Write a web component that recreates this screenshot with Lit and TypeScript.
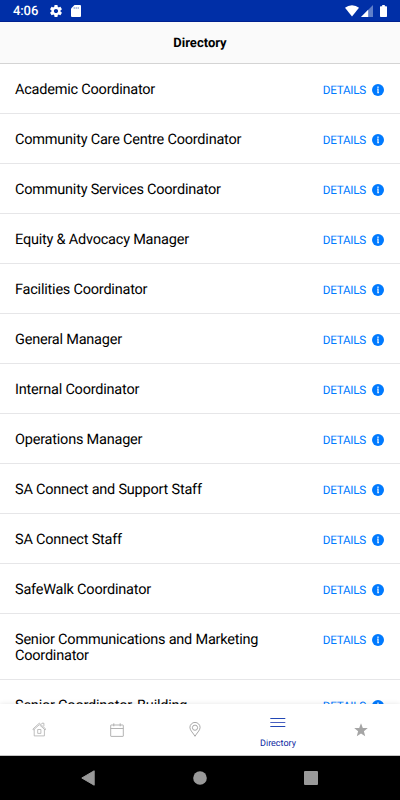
import { LitElement, html, css, svg } from "lit";
import { customElement } from "lit/decorators.js";

const entries = [
  "Academic Coordinator",
  "Community Care Centre Coordinator",
  "Community Services Coordinator",
  "Equity & Advocacy Manager",
  "Facilities Coordinator",
  "General Manager",
  "Internal Coordinator",
  "Operations Manager",
  "SA Connect and Support Staff",
  "SA Connect Staff",
  "SafeWalk Coordinator",
  "Senior Communications and Marketing Coordinator",
  "Senior Coordinator, Building",
];

const icon = (w: number, h: number, body: unknown) =>
  html`<svg width=${w} height=${h} viewBox="0 0 ${w} ${h}" fill="none">${body}</svg>`;

const gear = html`<svg width="12" height="12" viewBox="2 2 20 20" fill="#fff"><path d="M19.43 12.98c.04-.32.07-.64.07-.98s-.03-.66-.07-.98l2.11-1.65c.19-.15.24-.42.12-.64l-2-3.46c-.12-.22-.39-.3-.61-.22l-2.49 1c-.52-.4-1.08-.73-1.69-.98l-.38-2.65C14.46 2.18 14.25 2 14 2h-4c-.25 0-.46.18-.49.42l-.38 2.65c-.61.25-1.17.59-1.69.98l-2.49-1c-.23-.09-.49 0-.61.22l-2 3.46c-.13.22-.07.49.12.64l2.11 1.65c-.04.32-.07.65-.07.98s.03.66.07.98l-2.11 1.65c-.19.15-.24.42-.12.64l2 3.46c.12.22.39.3.61.22l2.49-1c.52.4 1.08.73 1.69.98l.38 2.65c.03.24.24.42.49.42h4c.25 0 .46-.18.49-.42l.38-2.65c.61-.25 1.17-.59 1.69-.98l2.49 1c.23.09.49 0 .61-.22l2-3.46c.12-.22.07-.49-.12-.64l-2.11-1.65zM12 15.5c-1.930 0-3.500-1.570-3.500-3.500s1.570-3.500 3.500-3.500 3.500 1.570 3.500 3.500-1.570 3.500-3.500 3.500z"/></svg>`;

const sdCard = icon(10, 12, svg`<path d="M3.500 0H9q1 0 1 1v10q0 1-1 1H1q-1 0-1-1V3.500z" fill="#fff"/><path d="M3.200 2v2M5.200 2v2M7.200 2v2" stroke="#7f96cf" stroke-width=".9"/>`);
const wifi = icon(14, 12, svg`<path d="M0 2.700Q3 .2 7 .2t7 2.500L7 11.500z" fill="#fff"/>`);
const signal = icon(12, 12, svg`<path d="M12 0v12H0z" fill="#5f7fca"/><path d="M7.200 4.800V12H0z" fill="#fff"/>`);
const battery = icon(7, 12, svg`<path d="M2.200 0h2.600v1.200H6.300q.7 0 .7.700v9.400q0 .7-.7.700H.7q-.7 0-.7-.7V1.900q0-.7.7-.7h1.500z" fill="#fff"/>`);
const info = icon(12, 12, svg`<circle cx="6" cy="6" r="6" fill="#007aff"/><path d="M6 2.600v1.400M5.200 5.200H6v3.600M5.300 8.700h1.600" stroke="#fff" stroke-width="1.200"/>`);

const house = icon(15, 15, svg`<g stroke="#aaa" stroke-width=".75"><path d="M2.200 7.300v6.600h10.200V7.300"/><path d="M.8 7.100 7.300 1.200l6.500 5.900-.7.800-5.800-5.200-5.800 5.200z"/><path d="M9.200 2.300l.8-1.100h1.900v3"/><path d="M5.700 7.500h3.200v3.900H5.700z"/></g>`);
const calendar = icon(14, 14, svg`<g stroke="#aaa" stroke-width=".9"><rect x=".7" y="2" width="12.600" height="11.400" rx=".4"/><path d="M.7 5.500h12.600M3.800.3v3M10.200.3v3"/></g>`);
const pin = icon(12, 15, svg`<g stroke="#999" stroke-width=".85"><path d="M6 14.300C4.500 11.300.9 8.500.9 5.500a5.100 5.100 0 0 1 10.200 0C11.100 8.500 7.500 11.300 6 14.300z"/><circle cx="6" cy="5.700" r="2.600"/></g>`);
const lines = icon(16, 10, svg`<path d="M.3 1.500h15M.3 9.500h15" stroke="#2247b5"/><path d="M.3 5.500h15" stroke="#4a60c0"/>`);
const star = icon(14, 14, svg`<path d="M7 .2 8.800 4.900l5 .2-3.900 3.200 1.300 5L7 10.600 2.800 13.300l1.300-5L.2 5.100l5-.2z" fill="#a5a5a5"/>`);

@customElement("app-root")
export class AppRoot extends LitElement {
  static styles = css`
    :host {
      display: flex;
      flex-direction: column;
      height: 800px;
      width: 400px;
      overflow: hidden;
      background: #fff;
      color: #000;
      font-family: Roboto, sans-serif;
      text-rendering: geometricPrecision;
    }
    svg { display: block; flex: none; }
    .status {
      flex: none;
      box-sizing: border-box;
      height: 22px;
      padding: 0 13px;
      display: flex;
      align-items: center;
      background: #002fa7;
      border-bottom: 1px solid #00208f;
      color: #fff;
    }
    .time { width: 37px; font-size: 13px; line-height: 22px; font-weight: 500; padding-top: 3px; letter-spacing: -0.1px; }
    .sd { margin-left: 9px; }
    .tray { margin-left: auto; display: flex; }
    .signal { margin-left: 2px; }
    .battery { margin-left: 7px; }
    .header {
      flex: none;
      box-sizing: border-box;
      height: 42px;
      background: #fafafa;
      border-bottom: 1px solid #d4d4d4;
      text-align: center;
      font-size: 13px;
      font-weight: 700;
      line-height: 43px;
    }
    .list { flex: 1; min-height: 0; overflow: hidden; }
    .row {
      box-sizing: border-box;
      display: flex;
      justify-content: space-between;
      align-items: flex-start;
      min-height: 50px;
      padding: 18px 16px 15px 15px;
      border-bottom: 1px solid #e6e6e8;
    }
    .name { width: 265px; font-size: 14.5px; line-height: 16px; letter-spacing: -0.215px; }
    .details {
      display: flex;
      align-items: center;
      gap: 6px;
      height: 16px;
      font-size: 11.7px;
      letter-spacing: -0.25px;
      color: #007aff;
    }
    .tabs {
      flex: none;
      box-sizing: border-box;
      height: 52px;
      display: flex;
      background: #fff;
      box-shadow: 0 0 5px rgba(0, 0, 0, 0.1);
      border-bottom: 1px solid #c4c4c4;
      position: relative;
    }
    .tab {
      width: 78px;
      display: flex;
      flex-direction: column;
      align-items: center;
      justify-content: center;
    }
    .wide { width: 88px; }
    .current { gap: 11px; padding-top: 8px; box-sizing: border-box; }
    .label { font-size: 9px; line-height: 12px; color: #0a1f9f; }
    .system {
      flex: none;
      height: 44px;
      background: #000;
      display: flex;
      align-items: center;
      justify-content: space-between;
      padding: 0 82px 0 81px;
    }
  `;

  render() {
    return html`
      <div class="status">
        <span class="time">4:06</span>${gear}<span class="sd">${sdCard}</span>
        <div class="tray">
          ${wifi}<span class="signal">${signal}</span><span class="battery">${battery}</span>
        </div>
      </div>
      <div class="header">Directory</div>
      <div class="list">
        ${entries.map(
          (name) => html`<div class="row">
            <div class="name">${name}</div>
            <div class="details"><span>DETAILS</span>${info}</div>
          </div>`
        )}
      </div>
      <div class="tabs">
        <div class="tab">${house}</div>
        <div class="tab">${calendar}</div>
        <div class="tab">${pin}</div>
        <div class="tab wide current">${lines}<span class="label">Directory</span></div>
        <div class="tab">${star}</div>
      </div>
      <div class="system">
        ${icon(14, 16, svg`<path d="M.8 8 13.200.8v14.400z" fill="#999" stroke="#999" stroke-linejoin="round"/>`)}
        ${icon(14, 14, svg`<circle cx="7" cy="7" r="6.800" fill="#999"/>`)}
        ${icon(14, 14, svg`<rect width="14" height="14" rx="1" fill="#999"/>`)}
      </div>
    `;
  }
}
